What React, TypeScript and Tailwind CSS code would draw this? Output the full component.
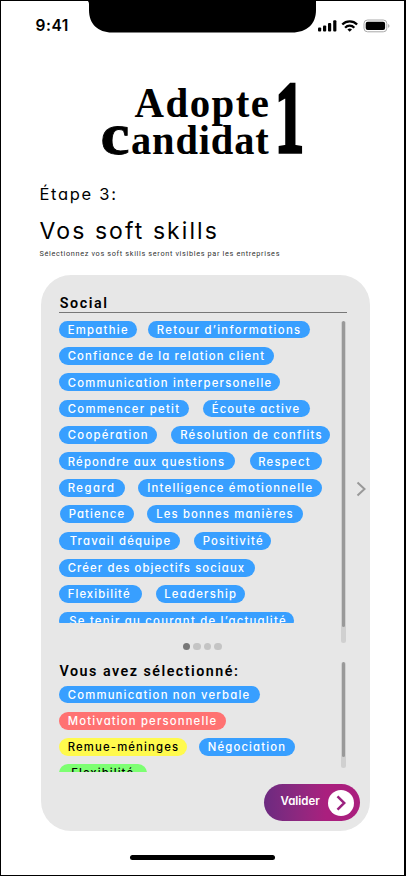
import { useLayoutEffect, useRef } from "react";

type Tone = "blue" | "red" | "yellow" | "green";

const tones: Record<Tone, string> = {
  blue: "bg-[#389fff] text-white",
  red: "bg-[#ff7272] text-white",
  yellow: "bg-[#fffa4d] text-black",
  green: "bg-[#7dff72] text-black",
};

/** One line of text whose tracking is adjusted so that it spans `width` pixels. */
function Fit({ text, width, className = "" }: { text: string; width: number; className?: string }) {
  const ref = useRef<HTMLSpanElement>(null);
  useLayoutEffect(() => {
    const el = ref.current;
    if (!el) return;
    el.style.letterSpacing = "0px";
    const natural = el.getBoundingClientRect().width;
    el.style.letterSpacing = `${(width + 0.4 - natural) / (text.length - 1)}px`;
  }, [text, width]);
  return (
    <span ref={ref} className={`inline-block whitespace-nowrap ${className}`}>
      {text}
    </span>
  );
}

interface Chip {
  label: string;
  /** pill width */
  w: number;
  /** text width */
  t: number;
  /** space before the pill */
  gap?: number;
  /** text inset */
  inset?: number;
  tone?: Tone;
}

const social: { h: string; chips: Chip[] }[] = [
  { h: "h-[26.5px]", chips: [{ label: "Empathie", w: 78, t: 59.5 }, { label: "Retour d’informations", w: 162.5, t: 143, gap: 10.5, inset: 9.5 }] },
  { h: "h-[26.3px]", chips: [{ label: "Confiance de la relation client", w: 215, t: 196 }] },
  { h: "h-[26.3px]", chips: [{ label: "Communication interpersonelle", w: 221, t: 203 }] },
  { h: "h-[26.5px]", chips: [{ label: "Commencer petit", w: 130, t: 111 }, { label: "Écoute active", w: 107, t: 87, gap: 13.5, inset: 9.5 }] },
  { h: "h-[26.4px]", chips: [{ label: "Coopération", w: 97.5, t: 79.5 }, { label: "Résolution de conflits", w: 158.5, t: 141, gap: 14.5, inset: 9.5 }] },
  { h: "h-[26.4px]", chips: [{ label: "Répondre aux questions", w: 175.5, t: 156 }, { label: "Respect", w: 72, t: 51, gap: 15, inset: 9 }] },
  { h: "h-[26.4px]", chips: [{ label: "Regard", w: 65.5, t: 46 }, { label: "Intelligence émotionnelle", w: 184, t: 164.5, gap: 13, inset: 10 }] },
  { h: "h-[26.6px]", chips: [{ label: "Patience", w: 74, t: 55, gap: 1, inset: 9 }, { label: "Les bonnes manières", w: 155.5, t: 136, gap: 13, inset: 9.5 }] },
  { h: "h-[27px]", chips: [{ label: "Travail déquipe", w: 120.500, t: 100, inset: 11 }, { label: "Positivité", w: 77, t: 59.5, gap: 14, inset: 9.5 }] },
  { h: "h-[26.4px]", chips: [{ label: "Créer des objectifs sociaux", w: 196, t: 176 }] },
  { h: "h-[26.4px]", chips: [{ label: "Flexibilité", w: 83, t: 61.5 }, { label: "Leadership", w: 89.5, t: 71.5, gap: 13.5, inset: 9 }] },
  { h: "h-[26.4px]", chips: [{ label: "Se tenir au courant de l’actualité", w: 235, t: 216, inset: 10.5 }] },
];

const selected: { h: string; chips: Chip[] }[] = [
  { h: "h-[26.2px]", chips: [{ label: "Communication non verbale", w: 201, t: 181 }] },
  { h: "h-[26px]", chips: [{ label: "Motivation personnelle", w: 167, t: 148, tone: "red" }] },
  { h: "h-[26.2px]", chips: [{ label: "Remue-méninges", w: 127.5, t: 110, tone: "yellow" }, { label: "Négociation", w: 96, t: 77, gap: 12, inset: 9.5 }] },
  { h: "h-[26px]", chips: [{ label: "Flexibilité", w: 87.5, t: 61.5, inset: 12.5, tone: "green" }] },
];

function ChipRow({ h, chips }: { h: string; chips: Chip[] }) {
  return (
    <div className={`flex shrink-0 items-start ${h}`}>
      {chips.map((c) => (
        <div
          key={c.label}
          className={`flex h-[17.8px] shrink-0 items-center rounded-full text-[11.3px] leading-[18px] font-medium [font-feature-settings:'cv11'] ${tones[c.tone ?? "blue"]}`}
          style={{ width: c.w, marginLeft: c.gap ?? 0, paddingLeft: (c.inset ?? 9) - 0.3 }}
        >
          <Fit text={c.label} width={c.t} className="relative top-[0.3px]" />
        </div>
      ))}
    </div>
  );
}

function StatusBar() {
  return (
    <header className="flex h-[64px] items-start justify-between">
      <div className="w-[88px] pt-[14px] pl-[34.5px] text-[15.5px] leading-[22px] font-semibold">
        <Fit text="9:41" width={32.5} />
      </div>
      <svg className="h-[33px] w-[228px] shrink-0" viewBox="0 0 228 33">
        <path d="M-1 0 C1 0 1 2 1 5 V9 C1 23 10 31.500 24 31.500 H204 C219 31.500 228 23 228 9 V0 Z" fill="#000" />
      </svg>
      <svg className="mt-[17px] h-[16px] w-[88px] shrink-0" viewBox="316.500 17.500 88 16">
        <rect x="318.500" y="27" width="3.200" height="4" rx="1" />
        <rect x="323.500" y="25" width="3.200" height="6" rx="1" />
        <rect x="328.500" y="22.500" width="3.200" height="8.500" rx="1" />
        <rect x="333.700" y="19.800" width="3.200" height="11.200" rx="1" />
        <g fill="none" stroke="#000" strokeWidth="2.300">
          <path d="M342.800 24 A10.300 10.300 0 0 1 357.600 24" />
          <path d="M345.600 27.200 A6.300 6.300 0 0 1 354.800 27.200" />
        </g>
        <path d="M347.900 28.900 Q350.200 27.200 352.500 28.900 L350.200 31.200 Z" />
        <rect x="364.500" y="19.500" width="22.800" height="11.800" rx="3.500" fill="none" stroke="#a9a9a9" />
        <rect x="366.200" y="21.200" width="19.400" height="8.400" rx="2" />
        <path d="M388.600 23.500 V27.300 Q390 26.800 390 25.400 T388.600 23.500" fill="#a9a9a9" />
      </svg>
    </header>
  );
}

function Logo() {
  return (
    <svg
      className="ml-[97px] h-[90px] w-[212px] shrink-0 overflow-visible font-['Liberation_Serif',serif] font-bold"
      viewBox="98 74 212 90"
    >
      <text transform="translate(134.500 116.500) scale(.95 1)" fontSize="43" textLength="141.500">Adopte</text>
      <text x="100.500" y="154" fontSize="59" textLength="29" lengthAdjust="spacingAndGlyphs" stroke="#000" strokeWidth="0.800">c</text>
      <text transform="translate(131 154) scale(.94 1)" fontSize="43" textLength="146.500">andidat</text>
      <text transform="translate(275 152.300) scale(.57 1)" fontSize="102" stroke="#000" strokeWidth="3.600">1</text>
    </svg>
  );
}

function Scrollbar({ track, thumb, offset }: { track: string; thumb: string; offset: string }) {
  return (
    <div className={`flex w-[5px] shrink-0 justify-center rounded-full bg-[#d0d0d0] ${track} ${offset}`}>
      <div className={`w-[3px] rounded-full bg-[#999999] ${thumb}`} />
    </div>
  );
}

export default function App() {
  return (
    <div className="flex h-[876px] w-[406px] flex-col overflow-hidden border-t border-r-2 border-b border-l border-black bg-white font-['Inter','Liberation_Sans',sans-serif] text-black">
      <StatusBar />
      <div className="mt-[9px]">
        <Logo />
      </div>

      <div className="flex h-[111px] shrink-0 flex-col pt-[18px] pl-[38.500px]">
        <div className="h-[24px] text-[16.500px] leading-[24px] [font-feature-settings:'cv11']">
          <Fit text="Étape 3:" width={76} />
        </div>
        <h1 className="mt-[8px] h-[34px] text-[23px] leading-[34px] font-normal [font-feature-settings:'cv11']">
          <Fit text="Vos soft skills" width={177} />
        </h1>
        <p className="h-[10px] pt-[0.500px] font-['Roboto',sans-serif] text-[7.300px] leading-[10px] text-[#333]">
          <Fit text="Sélectionnez vos soft skills seront visibles par les entreprises" width={239.5} />
        </p>
      </div>

      <main className="ml-[40px] flex h-[556px] w-[329px] shrink-0 flex-col rounded-[30px] bg-[#e7e7e7]">
        <h2 className="ml-[18px] h-[37.500px] w-[288px] shrink-0 border-b-[1.500px] border-[#777] pt-[18px] pl-[0.700px] font-['Roboto',sans-serif] text-[14.300px] leading-[20px] font-semibold">
          <Fit text="Social" width={47} />
        </h2>
        <div className="flex h-[330.500px] shrink-0 pl-[18px]">
          <div className="mt-[8px] flex h-[302.500px] w-[282px] shrink-0 flex-col overflow-hidden">
            {social.map((row) => (
              <ChipRow key={row.chips[0].label} {...row} />
            ))}
          </div>
          <Scrollbar track="h-[322.500px]" thumb="h-[306px]" offset="mt-[8px]" />
          <button type="button" aria-label="Suivant" className="mt-[168px] ml-[9.500px] h-[16px] w-[10px]">
            <svg className="h-[16px] w-[10px]" viewBox="0 0 10 16" fill="none" stroke="#999" strokeWidth="2">
              <path d="M1.500 1.500 L8.500 8 L1.500 14.500" />
            </svg>
          </button>
        </div>
        <div className="flex h-[8.500px] shrink-0 gap-[3.200px] pl-[142px]">
          <span className="size-[7.300px] rounded-full bg-[#777]" />
          <span className="size-[7.300px] rounded-full bg-[#c4c4c4]" />
          <span className="size-[7.300px] rounded-full bg-[#c4c4c4]" />
          <span className="size-[7.300px] rounded-full bg-[#c4c4c4]" />
        </div>
        <div className="flex h-[132.500px] shrink-0 pl-[18px]">
          <div className="flex w-[282px] shrink-0 flex-col">
            <h2 className="h-[33px] shrink-0 pt-[9.500px] pl-[0.500px] font-['Roboto',sans-serif] text-[14.300px] leading-[20px] font-semibold">
              <Fit text="Vous avez sélectionné:" width={178} />
            </h2>
            <div className="flex h-[87.500px] shrink-0 flex-col overflow-hidden pt-[1.200px]">
              {selected.map((row) => (
                <ChipRow key={row.chips[0].label} {...row} />
              ))}
            </div>
          </div>
          <Scrollbar track="h-[106px]" thumb="h-[95px]" offset="mt-[10px]" />
        </div>
        <button
          type="button"
          className="ml-[223px] flex h-[37px] w-[96px] shrink-0 items-center rounded-full bg-linear-to-r from-[#6c2a80] via-[#aa1f7e] via-65% to-[#aa1f7e] pl-[16.500px] text-white"
        >
          <span className="relative -top-px w-[47px] text-left text-[11.500px] font-semibold [font-feature-settings:'cv11']">
            <Fit text="Valider" width={39} />
          </span>
          <span className="flex size-[26px] items-center justify-center rounded-full bg-white">
            <svg className="h-[16px] w-[10px]" viewBox="0 0 10 16" fill="none" stroke="#9b227f" strokeWidth="2.500">
              <path d="M1.500 1.300 L8.300 8 L1.500 14.700" />
            </svg>
          </span>
        </button>
      </main>

      <div className="mt-[23.500px] ml-[129px] h-[5.500px] w-[145px] shrink-0 rounded-full bg-black" />
    </div>
  );
}
